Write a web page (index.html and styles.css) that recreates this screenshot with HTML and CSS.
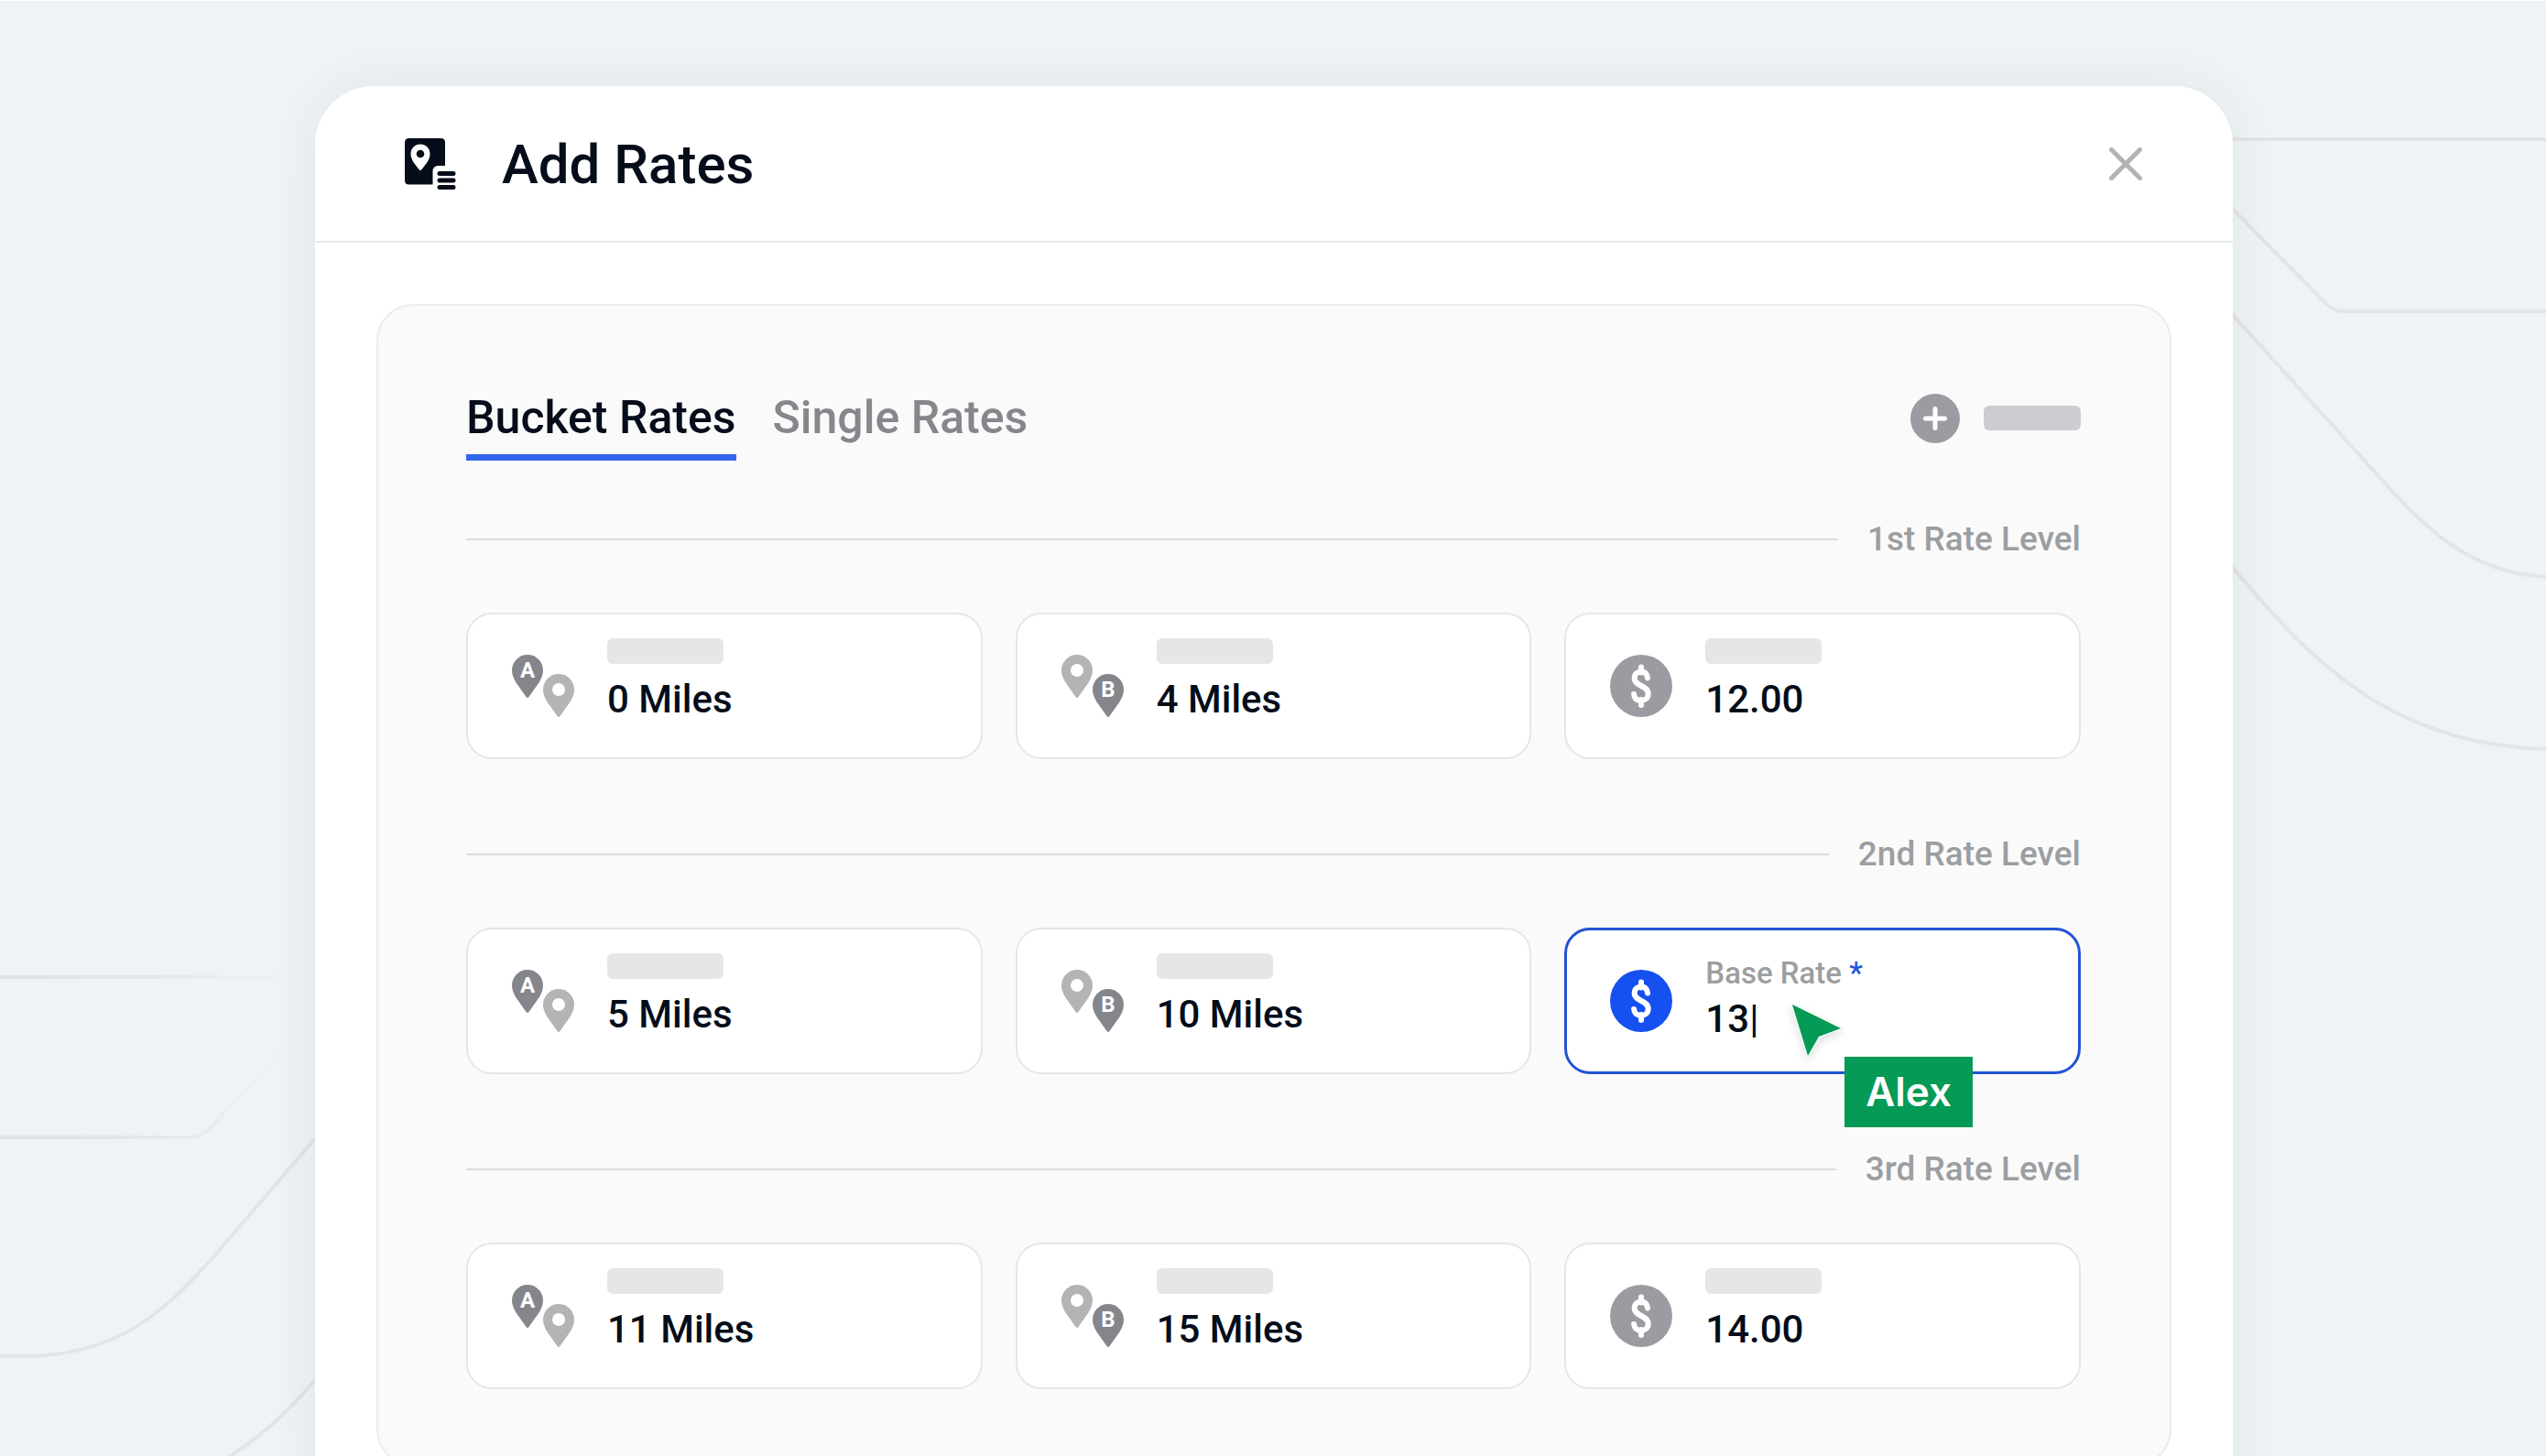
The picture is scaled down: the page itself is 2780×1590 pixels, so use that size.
FILE: index.html
```html
<!DOCTYPE html>
<html lang="en">
<head>
<meta charset="utf-8">
<meta name="viewport" content="width=device-width, initial-scale=1">
<title>Add Rates</title>
<link rel="stylesheet" href="styles.css">
</head>
<body>
<svg class="symbols" aria-hidden="true">
  <symbol id="pin" viewBox="0 0 34 47"><path d="M17 0C7.600 0 0 7.600 0 17c0 5 2 9.300 4.500 13.500L15.700 46.200c.7.900 1.900.9 2.600 0L29.500 30.500C32 26.300 34 22 34 17 34 7.600 26.400 0 17 0z"/></symbol>
  <symbol id="dollar" viewBox="0 0 68 68">
    <circle cx="34" cy="34" r="34" fill="currentColor"/>
    <path d="M34 13.500v6M34 49v6M41 25.500C40.500 21 38 18.500 34 18.500c-4.500 0-7.300 2.700-7.300 7 0 9 15 8 15 17 0 4.500-3.200 7.500-7.700 7.500-4.600 0-7.400-2.600-7.900-7" fill="none" stroke="#fff" stroke-width="6" stroke-linecap="round"/>
  </symbol>
</svg>

<main class="scene">
  <svg class="routes" viewBox="0 0 2780 1590" preserveAspectRatio="xMidYMin slice" aria-hidden="true">
    <defs>
      <linearGradient id="fade" gradientUnits="userSpaceOnUse" x1="0" y1="0" x2="320" y2="0">
        <stop offset="0" stop-color="#dfe3e6"/>
        <stop offset=".5" stop-color="#e3e7ea"/>
        <stop offset="1" stop-color="#e3e7ea" stop-opacity="0"/>
      </linearGradient>
    </defs>
    <g fill="none" stroke="#e1e5e8" stroke-width="4">
      <rect x="-10" y="1064" width="330" height="4" fill="url(#fade)" stroke="none"/>
      <path d="M-10 1241H208C218 1241 224 1236 233 1227L320 1134" stroke="url(#fade)"/>
      <path d="M-10 1480H25C130 1480 180 1430 230 1375L360 1224"/>
      <path d="M360 1487C325 1530 290 1567 240 1596"/>
      <path d="M2420 151H2790"/>
      <path d="M2420 209L2537 328C2545 336 2550 339 2560 339H2790"/>
      <path d="M2420 323L2580 500C2640 566 2690 629 2790 629"/>
      <path d="M2420 598C2500 690 2590 817 2790 817"/>
    </g>
  </svg>

  <section class="modal" aria-labelledby="modal-title">
    <header class="modal-header">
      <svg class="modal-icon" viewBox="0 0 56 56" aria-hidden="true">
        <path fill="#060d1a" fill-rule="evenodd" d="M4.500 0h35Q44 0 44 4.500V30h-7.500Q30.500 30 30.500 36.500V50.500h-26Q0 50.500 0 46V4.500Q0 0 4.500 0zM17 6.500C11 6.500 6.500 11 6.500 17c0 6.500 5 12 9.500 17.500q1 1 2 0C22.500 29 27.500 23.500 27.500 17 27.500 11 23 6.500 17 6.500z"/>
        <circle cx="17" cy="17" r="4.300" fill="#060d1a"/>
        <path d="M38 38.500h15M38 46h15M38 53.500h15" stroke="#060d1a" stroke-width="5" stroke-linecap="round"/>
      </svg>
      <h1 class="modal-title" id="modal-title">Add Rates</h1>
      <button class="close" type="button" aria-label="Close">
        <svg viewBox="0 0 36 36" aria-hidden="true"><path d="M2.500 2.500l31 31M33.500 2.500l-31 31" stroke="#b2b3b5" stroke-width="5" stroke-linecap="round"/></svg>
      </button>
    </header>

    <div class="modal-body">
      <div class="panel">
        <div class="toolbar">
          <div class="tabs" role="tablist">
            <button class="tab tab-active" type="button" role="tab" aria-selected="true">Bucket Rates</button>
            <button class="tab" type="button" role="tab" aria-selected="false">Single Rates</button>
          </div>
          <button class="add" type="button" aria-label="Add rate level">
            <svg class="add-icon" viewBox="0 0 54 54" aria-hidden="true"><circle cx="27" cy="27" r="27" fill="#9a9ca1"/><path d="M27 16.500v21M16.500 27h21" stroke="#fff" stroke-width="5" stroke-linecap="round"/></svg>
            <span class="add-label"></span>
          </button>
        </div>

        <section class="level">
          <h2 class="level-title">1st Rate Level</h2>
          <div class="fields">
            <div class="field">
              <svg class="field-icon" viewBox="0 0 68 68" aria-hidden="true"><use href="#pin" width="34" height="47" fill="#84868c"/><text x="17" y="25" class="pin-letter">A</text><use href="#pin" x="34" y="21" width="34" height="47" fill="#b3b4b6"/><circle cx="51" cy="38" r="7" fill="#fff"/></svg>
              <div class="field-body"><span class="skeleton"></span><input class="value" type="text" value="0 Miles" aria-label="Level 1 from"></div>
            </div>
            <div class="field">
              <svg class="field-icon" viewBox="0 0 68 68" aria-hidden="true"><use href="#pin" width="34" height="47" fill="#b3b4b6"/><circle cx="17" cy="17" r="7" fill="#fff"/><use href="#pin" x="34" y="21" width="34" height="47" fill="#84868c"/><text x="51" y="46" class="pin-letter">B</text></svg>
              <div class="field-body"><span class="skeleton"></span><input class="value" type="text" value="4 Miles" aria-label="Level 1 to"></div>
            </div>
            <div class="field">
              <svg class="field-icon" viewBox="0 0 68 68" aria-hidden="true"><use href="#dollar"/></svg>
              <div class="field-body"><span class="skeleton"></span><input class="value" type="text" value="12.00" aria-label="Level 1 base rate"></div>
            </div>
          </div>
        </section>

        <section class="level">
          <h2 class="level-title">2nd Rate Level</h2>
          <div class="fields">
            <div class="field">
              <svg class="field-icon" viewBox="0 0 68 68" aria-hidden="true"><use href="#pin" width="34" height="47" fill="#84868c"/><text x="17" y="25" class="pin-letter">A</text><use href="#pin" x="34" y="21" width="34" height="47" fill="#b3b4b6"/><circle cx="51" cy="38" r="7" fill="#fff"/></svg>
              <div class="field-body"><span class="skeleton"></span><input class="value" type="text" value="5 Miles" aria-label="Level 2 from"></div>
            </div>
            <div class="field">
              <svg class="field-icon" viewBox="0 0 68 68" aria-hidden="true"><use href="#pin" width="34" height="47" fill="#b3b4b6"/><circle cx="17" cy="17" r="7" fill="#fff"/><use href="#pin" x="34" y="21" width="34" height="47" fill="#84868c"/><text x="51" y="46" class="pin-letter">B</text></svg>
              <div class="field-body"><span class="skeleton"></span><input class="value" type="text" value="10 Miles" aria-label="Level 2 to"></div>
            </div>
            <div class="field field-active">
              <svg class="field-icon" viewBox="0 0 68 68" aria-hidden="true"><use href="#dollar"/></svg>
              <div class="field-body">
                <label class="field-label" for="base-rate">Base Rate <span class="required">*</span></label>
                <div class="editing"><input class="value value-short" id="base-rate" type="text" value="13" required><span class="caret" aria-hidden="true">|</span></div>
              </div>
              <div class="cursor">
                <svg class="cursor-arrow" viewBox="0 0 54 57" aria-hidden="true"><path d="M0 0L53 26L29 35L17 56Z" fill="#059a55" stroke="#f4fbf7" stroke-width="3" paint-order="stroke"/></svg>
                <span class="cursor-name">Alex</span>
              </div>
            </div>
          </div>
        </section>

        <section class="level">
          <h2 class="level-title">3rd Rate Level</h2>
          <div class="fields">
            <div class="field">
              <svg class="field-icon" viewBox="0 0 68 68" aria-hidden="true"><use href="#pin" width="34" height="47" fill="#84868c"/><text x="17" y="25" class="pin-letter">A</text><use href="#pin" x="34" y="21" width="34" height="47" fill="#b3b4b6"/><circle cx="51" cy="38" r="7" fill="#fff"/></svg>
              <div class="field-body"><span class="skeleton"></span><input class="value" type="text" value="11 Miles" aria-label="Level 3 from"></div>
            </div>
            <div class="field">
              <svg class="field-icon" viewBox="0 0 68 68" aria-hidden="true"><use href="#pin" width="34" height="47" fill="#b3b4b6"/><circle cx="17" cy="17" r="7" fill="#fff"/><use href="#pin" x="34" y="21" width="34" height="47" fill="#84868c"/><text x="51" y="46" class="pin-letter">B</text></svg>
              <div class="field-body"><span class="skeleton"></span><input class="value" type="text" value="15 Miles" aria-label="Level 3 to"></div>
            </div>
            <div class="field">
              <svg class="field-icon" viewBox="0 0 68 68" aria-hidden="true"><use href="#dollar"/></svg>
              <div class="field-body"><span class="skeleton"></span><input class="value" type="text" value="14.00" aria-label="Level 3 base rate"></div>
            </div>
          </div>
        </section>
      </div>
    </div>
  </section>
</main>
</body>
</html>
```
FILE: styles.css
```css
* { box-sizing: border-box; }

body {
  margin: 0;
  background: #eef3f6;
  color: #060d1a;
  font-family: Roboto, "Liberation Sans", sans-serif;
  font-weight: 500;
}

button,
input {
  margin: 0;
  padding: 0;
  border: 0;
  background: none;
  color: inherit;
  font: inherit;
}

button { cursor: pointer; }

.symbols {
  position: absolute;
  width: 0;
  height: 0;
}

.pin-letter {
  fill: #fff;
  font-size: 24px;
  font-weight: 700;
  text-anchor: middle;
}

.scene {
  position: relative;
  height: 100vh;
  padding: 93px 342px 0 344px;
  overflow: hidden;
  border-top: 1px solid #fff;
}

.routes {
  position: absolute;
  inset: 0;
  width: 100%;
  height: 100%;
}

.modal {
  position: relative;
  border-radius: 64px;
  background: #fff;
  box-shadow: 0 0 56px rgba(40, 40, 60, .07);
}

.modal-header {
  display: flex;
  align-items: center;
  height: 171px;
  padding: 0 99px 0 98px;
  border-bottom: 2px solid #e9eaea;
}

.modal-icon {
  width: 56px;
  height: 56px;
}

.modal-title {
  flex: 1;
  margin: 0 0 0 50px;
  padding-top: 2px;
  font-size: 60px;
  font-weight: 500;
  line-height: 72px;
}

.close svg {
  display: block;
  width: 36px;
  height: 36px;
}

.modal-body { padding: 67px; }

.panel {
  padding: 92px 97px 82px 96px;
  border: 2px solid #ececec;
  border-radius: 40px;
  background: #fafafa;
}

.toolbar {
  display: flex;
  align-items: center;
  justify-content: space-between;
  margin-bottom: 64px;
}

.tabs {
  display: flex;
  gap: 40px;
}

.tab {
  padding: 0 0 10px;
  border-bottom: 7px solid transparent;
  color: #85878c;
  font-size: 50px;
  line-height: 60px;
}

.tab-active {
  border-color: #3366ee;
  color: #060d1a;
}

.add {
  display: flex;
  align-items: center;
  gap: 26px;
  margin-bottom: 16px;
}

.add-icon {
  width: 54px;
  height: 54px;
}

.add-label {
  width: 106px;
  height: 27px;
  border-radius: 6px;
  background: #cccdd0;
}

.level + .level { margin-top: 82px; }

.level-title {
  display: flex;
  align-items: center;
  gap: 32px;
  margin: 0 0 58px;
  color: #9c9ea1;
  font-size: 37px;
  font-weight: 500;
  line-height: 44px;
}

.level-title::before {
  content: "";
  flex: 1;
  height: 2px;
  background: #dadbdb;
}

.fields {
  display: grid;
  grid-template-columns: repeat(3, 1fr);
  gap: 36px;
}

.field {
  position: relative;
  display: flex;
  align-items: center;
  gap: 36px;
  height: 160px;
  padding: 0 48px;
  border: 2px solid #e6e6e7;
  border-radius: 28px;
  background: #fff;
}

.field-icon {
  flex: none;
  width: 68px;
  height: 68px;
  color: #9a9ca1;
}

.field-body {
  display: flex;
  flex: 1;
  flex-direction: column;
  gap: 9px;
  min-width: 0;
  padding-bottom: 7px;
}

.skeleton {
  width: 127px;
  height: 28px;
  border-radius: 6px;
  background: #e6e6e8;
}

.value {
  width: 100%;
  height: 60px;
  outline: 0;
  font-size: 42px;
  line-height: 60px;
}

.field-active {
  padding: 0 47px;
  border: 3px solid #2153d3;
}

.field-active .field-icon { color: #1650f0; }

.field-active .field-body {
  gap: 2px;
  padding: 2px 0 0;
}

.field-label {
  color: #9c9ea1;
  font-size: 33px;
  line-height: 36px;
}

.required { color: #1f55dc; }

.editing {
  display: flex;
  font-size: 42px;
  line-height: 60px;
}

.value-short { width: 48px; }

.caret { font-weight: 400; }

.cursor {
  position: absolute;
  top: 81px;
  left: 246px;
  display: flex;
  align-items: flex-end;
  z-index: 1;
}

.cursor-arrow {
  width: 54px;
  height: 57px;
  margin: 0 3px 77px 0;
  overflow: visible;
  filter: drop-shadow(0 4px 4px rgba(0, 0, 0, .12));
}

.cursor-name {
  padding: 0 23px;
  background: #059a55;
  color: #fff;
  font-family: Inter, Roboto, sans-serif;
  font-size: 44px;
  font-weight: 600;
  line-height: 77px;
}
```
